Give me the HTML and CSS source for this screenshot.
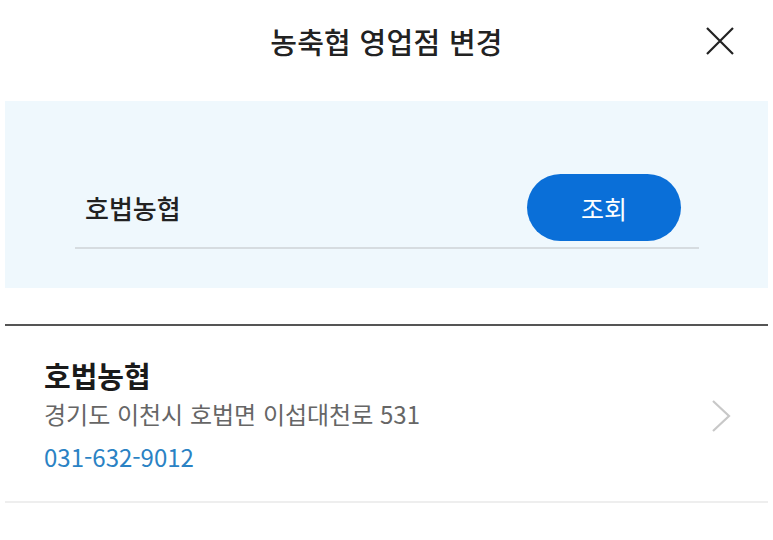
FILE: index.html
```html
<!DOCTYPE html>
<html lang="ko">
<head>
    <meta charset="UTF-8">
    <meta name="viewport" content="width=device-width, initial-scale=1.0">
    <title>농축협 영업점 변경</title>
    <link rel="stylesheet" href="styles.css">
</head>
<body>
    <div class="header">
        <span></span>
        <h1 class="title">농축협 영업점 변경</h1>
        <button class="close" aria-label="닫기">
            <svg width="30" height="30" viewBox="0 0 30 30">
                <path d="M2 2 L28 28 M28 2 L2 28" stroke="#222" stroke-width="2.2" fill="none"/>
            </svg>
        </button>
    </div>

    <div class="search">
        <div class="search-row">
            <input type="text" class="search-input" value="호법농협">
            <button class="search-btn">조회</button>
        </div>
    </div>

    <ul class="branch-list">
        <li class="branch">
            <div class="branch-info">
                <div class="branch-name">호법농협</div>
                <div class="branch-addr">경기도 이천시 호법면 이섭대천로 531</div>
                <div class="branch-tel">031-632-9012</div>
            </div>
            <svg class="chevron" width="22" height="34" viewBox="0 0 22 34">
                <path d="M3 2 L19 17 L3 32" stroke="#c8c8c8" stroke-width="2.2" fill="none"/>
            </svg>
        </li>
    </ul>
</body>
</html>
```

FILE: styles.css
```css
body {
    margin: 0;
    background-color: #fff;
    font-family: "Noto Sans CJK KR", "Noto Sans", sans-serif;
    color: #222;
}
.header {
    display: grid;
    grid-template-columns: 1fr auto 1fr;
    align-items: center;
    height: 82px;
}
.title {
    margin: 0;
    font-size: 29px;
    font-weight: 500;
    color: #222;
    letter-spacing: 0.3px;
}
.close {
    justify-self: end;
    margin-right: 38px;
    padding: 0;
    border: none;
    background: none;
    display: flex;
}
.search {
    margin: 19px 5px 0;
    height: 187px;
    background-color: #eff8fd;
    padding: 73px 69px 0 70px;
    box-sizing: border-box;
}
.search-row {
    display: flex;
    align-items: center;
    justify-content: space-between;
    border-bottom: 2px solid #d6dce0;
    padding: 0 18px 6px 10px;
}
.search-input {
    border: none;
    background: none;
    font-family: inherit;
    font-size: 26px;
    font-weight: 500;
    color: #222;
    padding: 0;
    width: 300px;
    outline: none;
}
.search-btn {
    width: 154px;
    height: 67px;
    border: none;
    border-radius: 34px;
    background-color: #0a6fd8;
    color: #fff;
    font-family: inherit;
    font-size: 25px;
}
.branch-list {
    list-style: none;
    margin: 36px 5px 0;
    padding: 0;
    border-top: 2px solid #555;
}
.branch {
    display: flex;
    align-items: center;
    justify-content: space-between;
    padding: 31px 36px 27px 39px;
    border-bottom: 2px solid #eee;
}
.branch-name {
    font-size: 29px;
    font-weight: 700;
    color: #1a1a1a;
    line-height: 36px;
}
.branch-addr {
    font-size: 24px;
    color: #666;
    line-height: 34px;
    margin-top: 4px;
}
.branch-tel {
    font-size: 24px;
    color: #2a82c4;
    line-height: 34px;
    margin-top: 9px;
}
```
